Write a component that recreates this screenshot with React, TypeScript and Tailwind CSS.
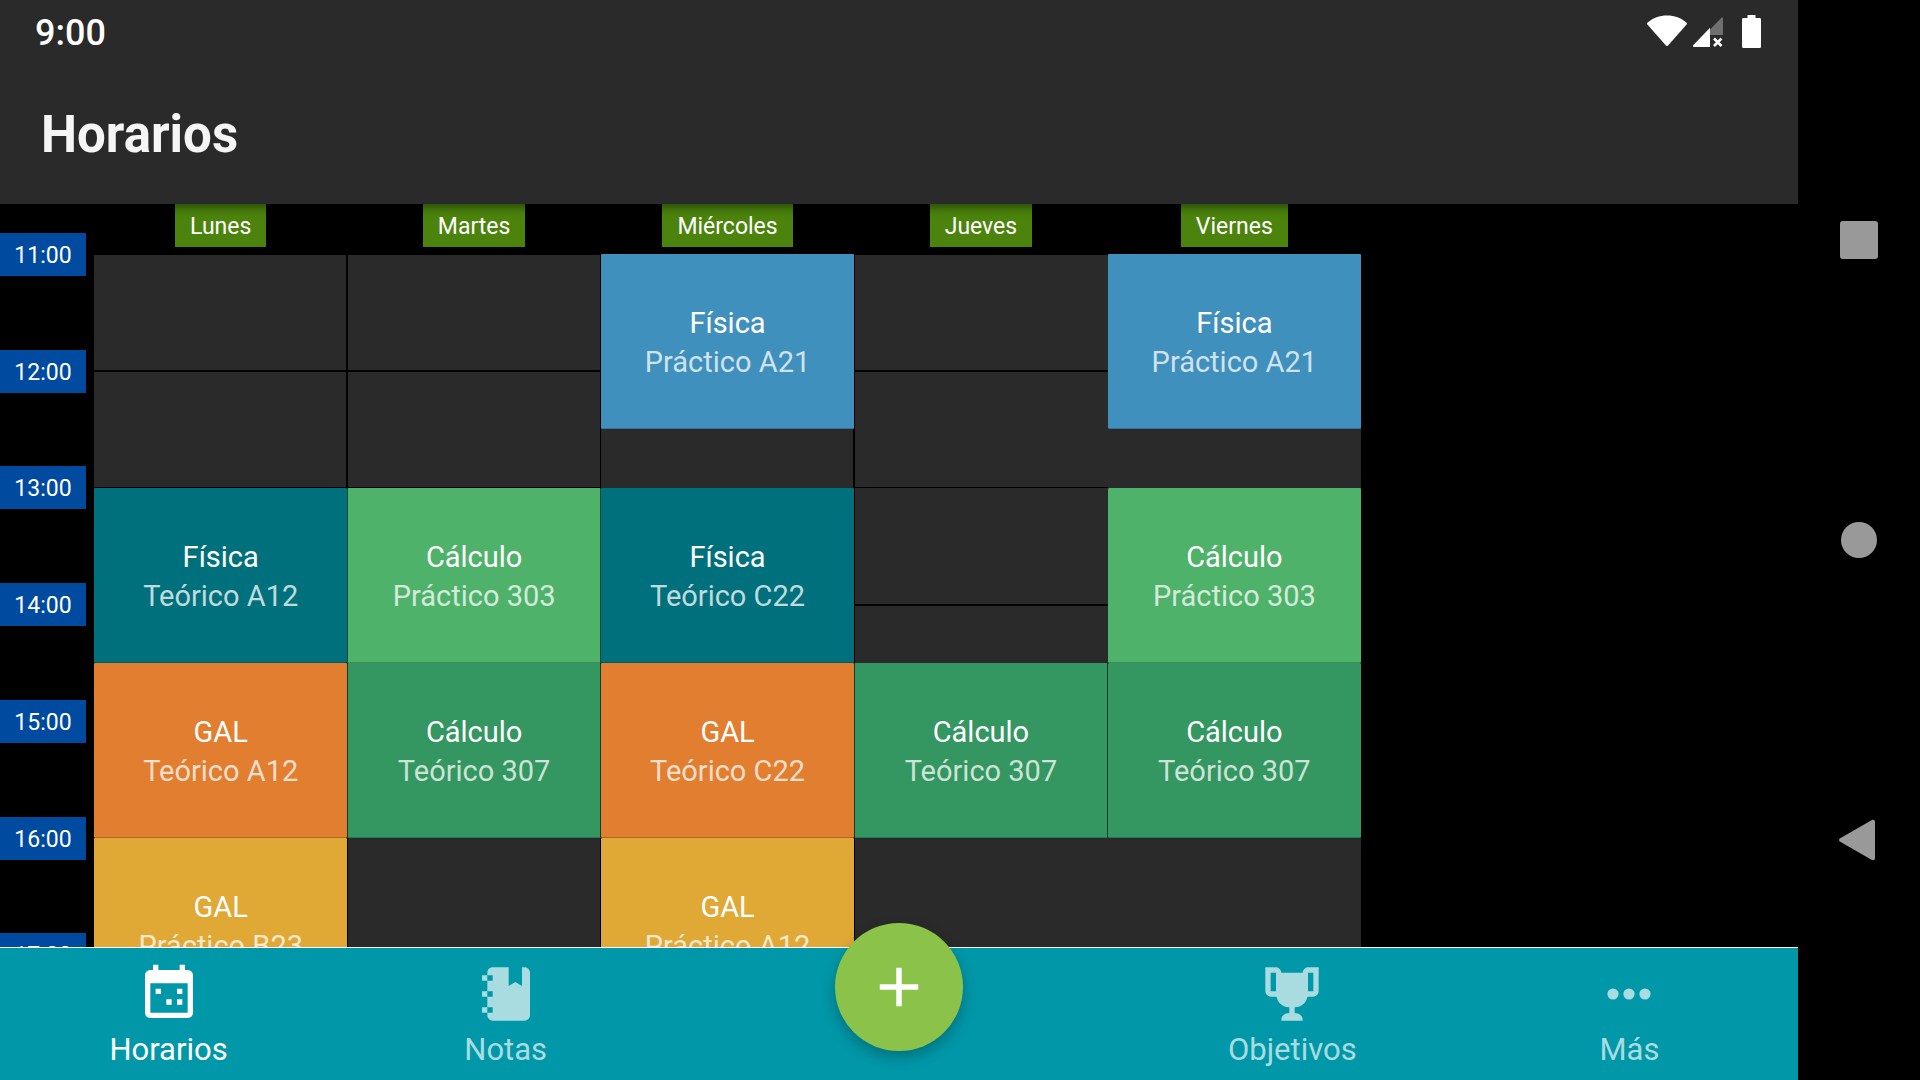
import { ReactNode } from 'react'

type Lesson = {
  subject: string
  room: string
  place: string
  color: string
}

const hours = ['11:00', '12:00', '13:00', '14:00', '15:00', '16:00', '17:00']
const days = ['Lunes', 'Martes', 'Miércoles', 'Jueves', 'Viernes']

// Grid rows are half hours, starting at 11:00.
const emptySlots = [
  'col-start-1 row-start-1 row-span-2 border-t border-r border-b',
  'col-start-1 row-start-3 row-span-2 border-t border-r border-b',
  'col-start-2 row-start-1 row-span-2 border-t border-x border-b',
  'col-start-2 row-start-3 row-span-2 border-t border-x border-b',
  'col-start-2 row-start-11 row-span-4 border-x',
  'col-start-3 row-start-4 row-span-1 border-r',
  'col-start-4 row-start-1 row-span-2 border-t border-l border-b',
  'col-start-4 row-start-3 row-span-2 border-t border-l border-b',
  'col-start-4 row-start-5 row-span-2 border-l border-b',
  'col-start-4 row-start-7 row-span-1 border-t border-l',
  'col-start-4 row-start-11 row-span-4 border-l',
  'col-start-5 row-start-4 row-span-1',
  'col-start-5 row-start-11 row-span-4',
]

const lessons: Lesson[] = [
  { subject: 'Física', room: 'Teórico A12', place: 'col-start-1 row-start-5', color: 'bg-[#00707c]' },
  { subject: 'GAL', room: 'Teórico A12', place: 'col-start-1 row-start-8', color: 'bg-[#e27e2f]' },
  { subject: 'GAL', room: 'Práctico B23', place: 'col-start-1 row-start-11', color: 'bg-[#e0a835]' },
  { subject: 'Cálculo', room: 'Práctico 303', place: 'col-start-2 row-start-5 border-x', color: 'bg-[#4fb26b]' },
  { subject: 'Cálculo', room: 'Teórico 307', place: 'col-start-2 row-start-8 border-x', color: 'bg-[#349660]' },
  { subject: 'Física', room: 'Práctico A21', place: 'col-start-3 row-start-1', color: 'bg-[#4090bd]' },
  { subject: 'Física', room: 'Teórico C22', place: 'col-start-3 row-start-5', color: 'bg-[#00707c]' },
  { subject: 'GAL', room: 'Teórico C22', place: 'col-start-3 row-start-8', color: 'bg-[#e27e2f]' },
  { subject: 'GAL', room: 'Práctico A12', place: 'col-start-3 row-start-11', color: 'bg-[#e0a835]' },
  { subject: 'Cálculo', room: 'Teórico 307', place: 'col-start-4 row-start-8 border-x', color: 'bg-[#349660]' },
  { subject: 'Física', room: 'Práctico A21', place: 'col-start-5 row-start-1', color: 'bg-[#4090bd]' },
  { subject: 'Cálculo', room: 'Práctico 303', place: 'col-start-5 row-start-5', color: 'bg-[#4fb26b]' },
  { subject: 'Cálculo', room: 'Teórico 307', place: 'col-start-5 row-start-8', color: 'bg-[#349660]' },
]

function StatusBar() {
  return (
    <div className="flex h-16 items-center justify-between pr-[37px] pl-[35px] text-white">
      <span className="pt-px text-[36px] leading-[42px] font-medium">9:00</span>
      <div className="flex items-center pb-[3px]">
        <svg width="42" height="34" viewBox="0 0 42 34" fill="currentColor" aria-label="Wi-Fi">
          <path d="M1.6 8.6C7 4 13.500 1.500 21 1.500s14 2.500 19.400 7.100c.7.600.7 1.200.2 1.900L22.300 31.300c-.8.900-1.800.9-2.600 0L1.400 10.500c-.5-.7-.5-1.300.2-1.900z" />
        </svg>
        <svg className="ml-1" width="34" height="34" viewBox="0 0 34 34" aria-label="Sin datos">
          <path d="M18 15.500L29.500 3.700c.8-.8 1.500-.4 1.500.6V21H18z" fill="#6f6f6f" />
          <path d="M18 13.800V33H2.300c-1.300 0-1.700-1.200-.9-2.100z" fill="currentColor" />
          <path d="M22 24.500l7.500 7.500M29.500 24.500L22 32" stroke="currentColor" strokeWidth="2.600" />
        </svg>
        <svg className="ml-4" width="19" height="34" viewBox="0 0 19 34" fill="currentColor" aria-label="Batería">
          <path d="M5.500 1h8v3H17.500c1 0 1.500.6 1.500 1.500v27c0 1-.6 1.500-1.500 1.500h-16C.5 34 0 33.400 0 32.500v-27C0 4.500.6 4 1.500 4h4z" />
        </svg>
      </div>
    </div>
  )
}

function Timetable() {
  return (
    <main className="flex min-h-0 flex-1 overflow-hidden bg-black">
      <div className="mt-[29px] grid h-[817px] w-[94px] shrink-0 grid-rows-7">
        {hours.map((hour) => (
          <time
            key={hour}
            className="flex h-[43px] w-[86px] items-center justify-center bg-[#004a9f] pt-[3px] text-[23px] leading-[28px] text-white"
          >
            {hour}
          </time>
        ))}
      </div>
      <div className="min-w-0 flex-[29]">
        <div className="grid h-[50px] grid-cols-5 items-start justify-items-center">
          {days.map((day) => (
            <h2
              key={day}
              className="flex h-[43px] items-center bg-[#4b830d] px-[15px] pt-[3px] text-[23px] leading-[28px] text-white"
            >
              {day}
            </h2>
          ))}
        </div>
        <div className="grid h-[818px] grid-cols-5 grid-rows-14">
          {emptySlots.map((slot) => (
            <div key={slot} className={`border-black bg-[#2a2a2a] ${slot}`} />
          ))}
          {lessons.map((lesson) => (
            <button
              key={lesson.place}
              type="button"
              className={`row-span-3 flex flex-col items-center justify-center rounded-[1px] border-b border-x-black/60 border-b-black/20 pt-1 text-[29px] leading-[39px] ${lesson.color} ${lesson.place}`}
            >
              <span className="text-white">{lesson.subject}</span>
              <span className="text-white/75">{lesson.room}</span>
            </button>
          ))}
        </div>
      </div>
      <div className="flex-[10]" />
    </main>
  )
}

function Tab({ label, active, children }: { label: string; active?: boolean; children: ReactNode }) {
  return (
    <button
      type="button"
      aria-current={active ? 'page' : undefined}
      className={`flex min-w-0 flex-[3] flex-col items-center pt-[14px] ${active ? 'text-white' : 'text-[#a9dce1]'}`}
    >
      <svg width="64" height="64" viewBox="0 0 24 24" fill="currentColor" aria-hidden="true">
        {children}
      </svg>
      <span className="mt-1 text-[31px] leading-[40px]">{label}</span>
    </button>
  )
}

function TabBar() {
  return (
    <nav className="relative flex h-[133px] shrink-0 border-t border-white bg-[#0097a8]">
      <Tab label="Horarios" active>
        <path
          fillRule="evenodd"
          d="M6 1H8V3H16V1H18V3H19C20.100 3 21 3.900 21 5V19C21 20.100 20.100 21 19 21H5C3.900 21 3 20.100 3 19V5C3 3.900 3.900 3 5 3H6V1M5 8V19H19V8H5M7 10H9V12H7V10M15 10H17V12H15V10M11 14H13V16H11V14M15 14H17V16H15V14Z"
          clipRule="evenodd"
        />
      </Tab>
      <Tab label="Notas">
        <path d="M3,7V5H5V4C5,2.890 5.900,2 7,2H13V9L15.500,7.500L18,9V2H19C20.050,2 21,2.950 21,4V20C21,21.050 20.050,22 19,22H7C5.950,22 5,21.050 5,20V19H3V17H5V13H3V11H5V7H3M7,11H5V13H7V11M7,7V5H5V7H7M7,19V17H5V19H7Z" />
      </Tab>
      <div className="flex flex-[4] justify-center">
        <button
          type="button"
          aria-label="Agregar"
          className="-mt-[25px] flex size-32 items-center justify-center rounded-full bg-[#8bc34a] text-white shadow-[0_6px_14px_rgba(0,0,0,0.25)]"
        >
          <svg width="66" height="66" viewBox="0 0 24 24" fill="currentColor" aria-hidden="true">
            <path d="M19 13h-6v6h-2v-6H5v-2h6V5h2v6h6v2z" />
          </svg>
        </button>
      </div>
      <Tab label="Objetivos">
        <path d="M20.200,2H18C17.100,2 16,3 16,4H8C8,3 6.900,2 6,2H2V11C2,12 3,13 4,13H6.200C6.600,15 7.900,16.700 11,17V19.100C8.800,19.300 8,20.400 8,21.700V22H16V21.700C16,20.400 15.200,19.300 13,19.100V17C16.100,16.700 17.400,15 17.800,13H20C21,13 22,12 22,11V2H20.200M4,11V4H6V11H4M20,11H18V4H20V11Z" />
      </Tab>
      <Tab label="Más">
        <circle cx="6" cy="12" r="2.100" />
        <circle cx="12" cy="12" r="2.100" />
        <circle cx="18" cy="12" r="2.100" />
      </Tab>
    </nav>
  )
}

function SystemNav() {
  return (
    <aside className="flex w-[122px] shrink-0 flex-col items-center justify-center bg-black text-[#999999]">
      <button type="button" aria-label="Recientes" className="flex h-[300px] w-full items-center justify-center">
        <span className="size-[38px] rounded-[3px] bg-current" />
      </button>
      <button type="button" aria-label="Inicio" className="flex h-[300px] w-full items-center justify-center">
        <span className="size-9 rounded-full bg-current" />
      </button>
      <button type="button" aria-label="Atrás" className="flex h-[300px] w-full items-center justify-center">
        <svg width="40" height="42" viewBox="0 0 40 42" fill="currentColor" aria-hidden="true">
          <path d="M1.200 19.300L32.500 1.200C34.500.2 36 1 36 3v36c0 2-1.500 2.800-3.500 1.800L1.200 22.700c-1.600-.9-1.600-2.500 0-3.400z" />
        </svg>
      </button>
    </aside>
  )
}

export default function App() {
  return (
    <div className="flex h-screen overflow-hidden bg-black font-[Roboto,sans-serif]">
      <div className="flex min-w-0 flex-1 flex-col">
        <header className="relative z-10 shrink-0 bg-[#2a2a2a] shadow-[0_4px_8px_rgba(0,0,0,0.4)]">
          <StatusBar />
          <h1 className="flex h-[140px] items-center pt-[2px] pl-[41px] text-[51px] leading-[60px] font-bold text-[#f5f5f5]">
            Horarios
          </h1>
        </header>
        <Timetable />
        <TabBar />
      </div>
      <SystemNav />
    </div>
  )
}
